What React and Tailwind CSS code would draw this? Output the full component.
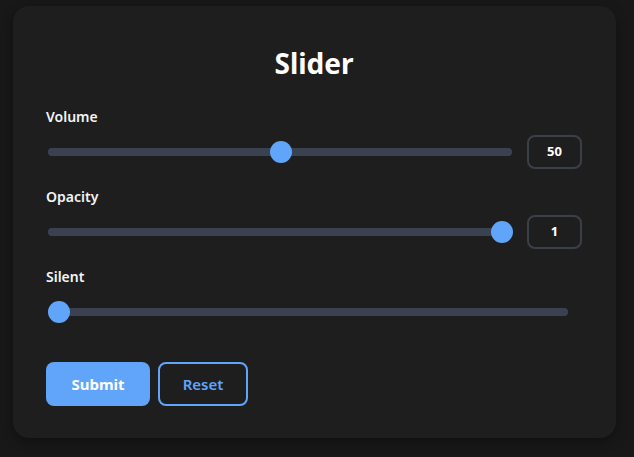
import React from "react";

function Slider({ value, min = 0, max = 100, showBox = true, display }) {
  const pct = (value - min) / (max - min);
  return (
    <div className="flex items-center h-[34px]">
      <div className={showBox ? "relative flex-1 ml-[2px] h-[8px] rounded-full bg-[#3a4252]" : "relative flex-1 ml-[2px] mr-[14px] h-[8px] rounded-full bg-[#3a4252]"}>
        <div
          className="absolute top-1/2 w-[22px] h-[22px] -translate-y-1/2 rounded-full bg-[#60a5fa]"
          style={{ left: `calc(${pct} * (100% - 21px))` }}
        />
      </div>
      {showBox && (
        <div className="ml-[15px] w-[55px] h-[34px] flex items-center justify-center rounded-lg border-2 border-[#3b3f47] text-[13px] font-bold text-white">
          {display}
        </div>
      )}
    </div>
  );
}

function Group({ label, children }) {
  return (
    <div className="flex flex-col">
      <div className="text-[14px] leading-[20px] font-semibold text-[#f3f4f6]">{label}</div>
      <div className="mt-[8px]">{children}</div>
    </div>
  );
}

export default function App() {
  return (
    <div
      className="w-[634px] h-[457px] bg-[#181818] pt-[6px] pl-[13px]"
      style={{ fontFamily: '"Noto Sans", "Open Sans", sans-serif' }}
    >
      <div className="w-[603px] rounded-2xl bg-[#1e1e1e] pt-[35px] pb-[32px] pl-[33px] pr-[34px] shadow-[0_4px_12px_rgba(0,0,0,0.35)]">
        <h1 className="text-center text-[28px] leading-[44px] font-bold text-white">Slider</h1>
        <div className="mt-[22px] flex flex-col gap-[18px]">
          <Group label="Volume">
            <Slider value={50} display="50" />
          </Group>
          <Group label="Opacity">
            <Slider value={1} min={0} max={1} display="1" />
          </Group>
          <Group label="Silent">
            <Slider value={0} showBox={false} />
          </Group>
        </div>
        <div className="mt-[33px] flex gap-[8px]">
          <button className="w-[104px] h-[44px] rounded-lg bg-[#60a5fa] text-white text-[15px] font-bold">
            Submit
          </button>
          <button className="w-[90px] h-[44px] rounded-lg border-2 border-[#60a5fa] text-[#60a5fa] text-[15px] font-semibold">
            Reset
          </button>
        </div>
      </div>
    </div>
  );
}
